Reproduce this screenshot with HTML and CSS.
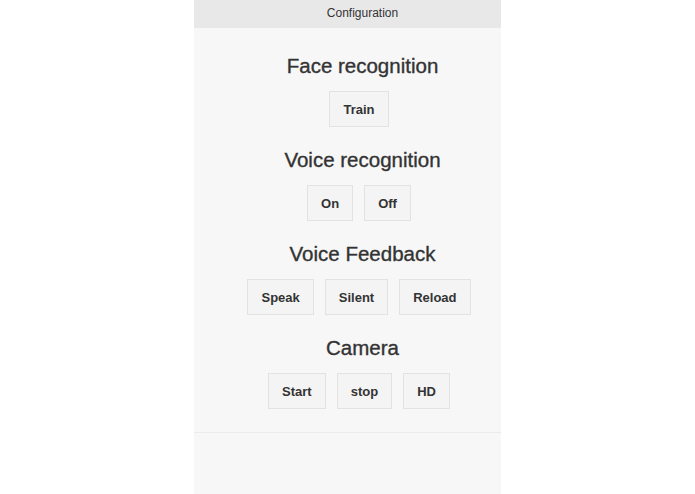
FILE: index.html
```html
<!DOCTYPE html>
<html>
<head>
<meta charset="utf-8">
<link rel="stylesheet" href="styles.css">
</head>
<body>
<div class="panel">
  <div class="header">Configuration</div>
  <div class="content">
    <section class="group">
      <h3 class="title">Face recognition</h3>
      <div class="row"><button class="btn">Train</button></div>
    </section>
    <section class="group">
      <h3 class="title">Voice recognition</h3>
      <div class="row"><button class="btn">On</button><button class="btn">Off</button></div>
    </section>
    <section class="group">
      <h3 class="title">Voice Feedback</h3>
      <div class="row"><button class="btn">Speak</button><button class="btn">Silent</button><button class="btn">Reload</button></div>
    </section>
    <section class="group">
      <h3 class="title">Camera</h3>
      <div class="row"><button class="btn">Start</button><button class="btn">stop</button><button class="btn">HD</button></div>
    </section>
  </div>
  <div class="footer"></div>
</div>
</body>
</html>
```
FILE: styles.css
```css
html, body {
  margin: 0;
  padding: 0;
  background: #ffffff;
  font-family: "Liberation Sans", Arial, sans-serif;
  color: #333333;
}
.panel {
  width: 307px;
  margin-left: 194px;
  min-height: 494px;
  background: #f7f7f7;
  display: flex;
  flex-direction: column;
}
.header {
  height: 28px;
  line-height: 27px;
  padding-left: 30px;
  background: #e8e8e8;
  text-align: center;
  font-size: 12px;
  color: #333;
}
.content {
  padding: 26px 0 23px 23px;
  display: flex;
  flex-direction: column;
  gap: 21px;
}
.group {
  display: flex;
  flex-direction: column;
  align-items: center;
}
.title {
  margin: 0 0 13px;
  padding-left: 7px;
  font-size: 20.5px;
  line-height: 24px;
  font-weight: normal;
  -webkit-text-stroke: 0.35px #333;
  color: #333;
}
.row {
  display: flex;
  justify-content: center;
  gap: 11px;
}
.btn {
  height: 36px;
  padding: 0 13px;
  border: 1px solid #e2e2e2;
  background: #f4f4f4;
  font-family: "Liberation Sans", Arial, sans-serif;
  font-weight: bold;
  font-size: 13px;
  color: #333;
}
.footer {
  flex: 1;
  border-top: 1px solid #ebebeb;
}
```
